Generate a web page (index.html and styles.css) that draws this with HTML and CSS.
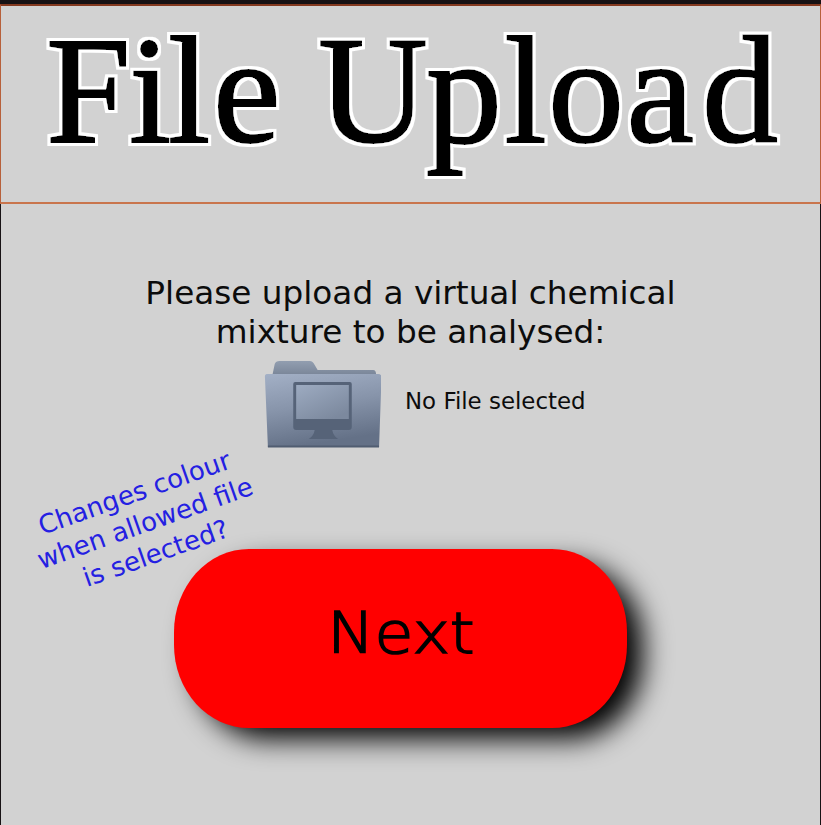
FILE: index.html
```html
<!DOCTYPE html>
<html lang="en">
<head>
<meta charset="utf-8">
<title>File Upload</title>
<link rel="stylesheet" href="styles.css">
</head>
<body>
<header class="banner">
  <svg class="title" width="819" height="195" role="heading" aria-level="1">
    <filter id="outline" filterUnits="userSpaceOnUse" x="0" y="0" width="819" height="195">
      <feMorphology in="SourceAlpha" operator="dilate" radius="3" result="grown"/>
      <feGaussianBlur in="grown" stdDeviation=".5" result="soft"/>
      <feFlood flood-color="#fff"/>
      <feComposite in2="soft" operator="in" result="halo"/>
      <feMerge><feMergeNode in="halo"/><feMergeNode in="SourceGraphic"/></feMerge>
    </filter>
    <text y="136" x="45 128 167 212 279 317 425 503.500 547 625.500 701">File Upload</text>
  </svg>
</header>
<main class="content">
  <p class="prompt">Please upload a virtual chemical<br>mixture to be analysed:</p>
  <div class="picker">
    <svg class="folder" width="117" height="92" viewBox="0 0 120 92" preserveAspectRatio="none">
      <defs>
        <linearGradient id="front" x1="0" y1="0" x2=".25" y2="1">
          <stop offset="0" stop-color="#a3b0c6"/><stop offset=".5" stop-color="#8794aa"/><stop offset="1" stop-color="#647187"/>
        </linearGradient>
        <linearGradient id="back" x1="0" y1="0" x2="0" y2="1">
          <stop offset="0" stop-color="#929eb0"/><stop offset="1" stop-color="#717d90"/>
        </linearGradient>
        <linearGradient id="glass" x1="0" y1="0" x2=".7" y2="1">
          <stop offset="0" stop-color="#9dabc1"/><stop offset="1" stop-color="#7c899e"/>
        </linearGradient>
      </defs>
      <path d="M8 18 11 4Q12 1 16 1H47Q50 1 52 5L55 10H112Q115 10 115 15V20H8Z" fill="url(#back)"/>
      <path d="M3 14H117Q121 14 120.500 18L118 87H4L1 18Q.5 14 3 14Z" fill="url(#front)"/>
      <path d="M4 85.500H118V87.500H4Z" fill="#505d71"/>
      <path d="M32 22H88Q90 22 90 24V67Q90 70 87 70H70Q71 76 76 79H46Q51 76 52 70H33Q30 70 30 67V24Q30 22 32 22Z" fill="#566378"/>
      <path d="M33 25H87V59H33Z" fill="url(#glass)"/>
    </svg>
    <span class="status">No File selected</span>
  </div>
  <p class="note">Changes colour<br>when allowed file<br>is selected?</p>
  <button class="next" type="button"><span class="next-label">Next</span></button>
</main>
</body>
</html>
```
FILE: styles.css
```css
* { box-sizing: border-box; }
body {
  margin: 0;
  height: 825px;
  overflow: hidden;
  background: #d2d2d2;
  border-top: 4px solid #171214;
  font-family: "DejaVu Sans", Verdana, sans-serif;
  color: #0c0c0c;
}
.banner {
  height: 200px;
  border: 1px solid #b7603b;
  border-top: 2px solid #843a20;
  border-bottom: 2px solid #c9754d;
}
.title { display: block; overflow: visible; }
.title text {
  font-family: "Liberation Serif", serif;
  font-size: 152px;
  fill: #000;
  stroke: #000;
  stroke-width: 2px;
  filter: url(#outline);
}
.content {
  position: relative;
  height: 621px;
  padding-top: 70px;
  border-left: 1px solid #171214;
  border-right: 1px solid #171214;
}
.prompt {
  margin: 0;
  text-align: center;
  font-size: 32.7px;
  line-height: 39px;
}
.picker {
  display: flex;
  margin: 8px 0 0 263px;
}
.folder { display: block; }
.status {
  margin-left: 24px;
  font-size: 22.9px;
  line-height: 82px;
}
.note {
  position: absolute;
  left: 24px;
  top: 271px;
  width: 240px;
  margin: 0;
  text-align: center;
  font-size: 26px;
  line-height: 32px;
  color: #2420e2;
  transform: rotate(-19.5deg);
}
.next {
  display: block;
  width: 453px;
  height: 179px;
  margin: 97px 0 0 173px;
  padding: 0 0 10px;
  border: 0;
  border-radius: 75px / 83px;
  background: #f00;
  box-shadow: 18px 13px 28px -2px #000;
  font: 200 57.5px "DejaVu Sans Light", "DejaVu Sans", sans-serif;
  color: #000;
  -webkit-text-stroke: 1.6px #000;
}
.next-label {
  display: inline-block;
  transform: scaleX(1.1);
}
```
